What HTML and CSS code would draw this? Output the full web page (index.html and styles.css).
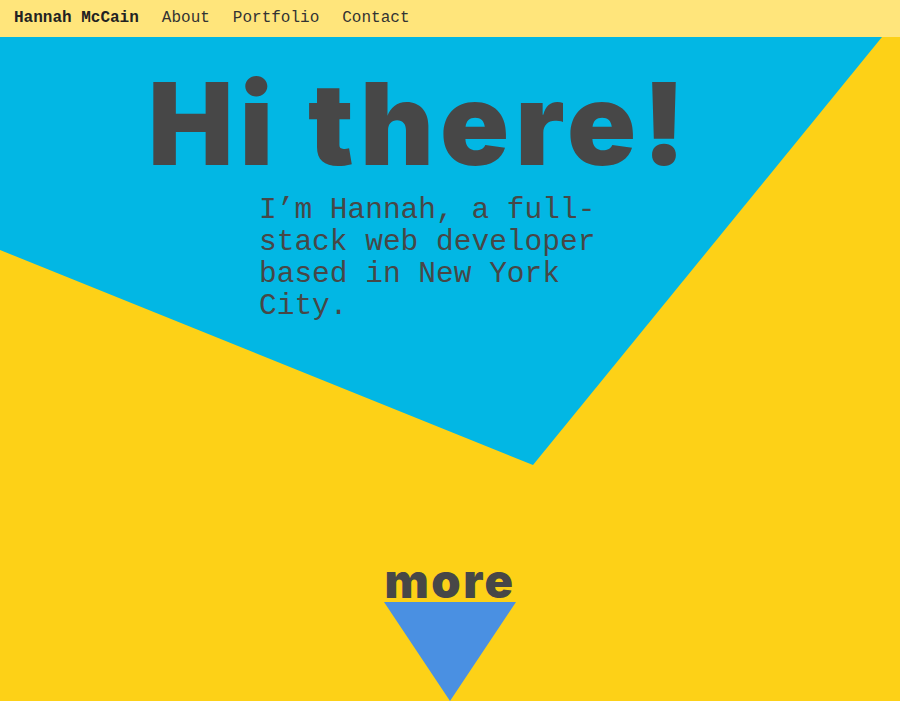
FILE: index.html
```html
<!DOCTYPE html>
<html lang="en">
<head>
<meta charset="utf-8">
<title>Hannah McCain</title>
<link rel="stylesheet" href="styles.css">
</head>
<body>
<nav class="nav">
  <a class="brand" href="#">Hannah McCain</a>
  <a class="nav-link" href="#">About</a>
  <a class="nav-link" href="#">Portfolio</a>
  <a class="nav-link" href="#">Contact</a>
</nav>
<main class="hero">
  <div class="hero-content">
    <h1 class="title">Hi there!</h1>
    <p class="intro">I’m Hannah, a full-stack web developer based in New York City.</p>
  </div>
  <a class="more" href="#">
    <span class="more-label">more</span>
    <span class="more-arrow"></span>
  </a>
</main>
</body>
</html>
```
FILE: styles.css
```css
html, body {
  margin: 0;
  padding: 0;
  height: 100%;
}
body {
  background: #fdd117;
  overflow: hidden;
}
.nav {
  height: 37px;
  background: #ffe57b;
  display: flex;
  align-items: center;
  padding: 0 14px;
  gap: 23px;
  box-sizing: border-box;
}
.nav a {
  text-decoration: none;
  font-family: "Liberation Mono", "DejaVu Sans Mono", monospace;
  font-size: 16px;
  line-height: 37px;
}
.brand {
  color: #222;
  font-weight: 700;
}
.nav-link {
  color: #333;
  font-weight: 400;
}
.hero {
  position: relative;
  height: 664px;
  display: flex;
  flex-direction: column;
}
.hero::before {
  content: "";
  position: absolute;
  inset: 0;
  background: #02b7e4;
  clip-path: polygon(0 0, 882px 0, 533px 428px, 0 213px);
}
.hero-content {
  position: relative;
  padding: 25px 0 0 148px;
}
.title {
  margin: 0;
  font-family: Inter, "Noto Sans", sans-serif;
  font-weight: 900;
  font-size: 114px;
  line-height: 124px;
  letter-spacing: 6px;
  color: #474747;
}
.intro {
  margin: 8px 0 0 111px;
  width: 360px;
  font-family: "Liberation Mono", "DejaVu Sans Mono", monospace;
  font-size: 29.5px;
  line-height: 32px;
  color: #474747;
}
.more {
  position: relative;
  margin-top: auto;
  align-self: center;
  display: flex;
  flex-direction: column;
  align-items: center;
  text-decoration: none;
}
.more-label {
  font-family: Inter, "Noto Sans", sans-serif;
  font-weight: 900;
  font-size: 47px;
  line-height: 42px;
  letter-spacing: 2.5px;
  color: #474747;
}
.more-arrow {
  width: 0;
  height: 0;
  border-left: 66px solid transparent;
  border-right: 66px solid transparent;
  border-top: 99px solid #4a90e2;
}
```
